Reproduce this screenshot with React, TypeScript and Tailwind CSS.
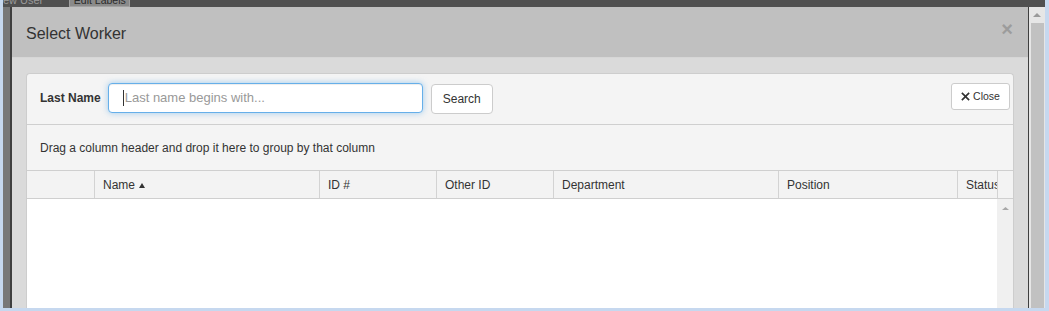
import React from 'react';

const FONT = "font-['Liberation_Sans',Arial,sans-serif]";

interface Column {
  label: string;
  width: string;
  sorted?: boolean;
}

const COLUMNS: Column[] = [
  { label: '', width: 'w-[68px]' },
  { label: 'Name', width: 'w-[225px]', sorted: true },
  { label: 'ID #', width: 'w-[117px]' },
  { label: 'Other ID', width: 'w-[117px]' },
  { label: 'Department', width: 'w-[225px]' },
  { label: 'Position', width: 'w-[179px]' },
  { label: 'Status', width: 'w-[40px]' },
];

function TimesIcon() {
  return (
    <svg width="9" height="9" viewBox="0 0 10 10" className="shrink-0">
      <path
        d="M1.6 0.3 L5 3.7 L8.4 0.3 L9.7 1.6 L6.3 5 L9.7 8.4 L8.4 9.7 L5 6.3 L1.6 9.7 L0.3 8.4 L3.7 5 L0.3 1.6 Z"
        fill="#333"
      />
    </svg>
  );
}

function UpArrow({ color, w, h }: { color: string; w: number; h: number }) {
  return (
    <svg width={w} height={h} viewBox={`0 0 ${w} ${h}`}>
      <polygon points={`0,${h} ${w / 2},0 ${w},${h}`} fill={color} />
    </svg>
  );
}

// Grid toolbar with the last name search
function SearchBar() {
  return (
    <div className="flex h-[51px] shrink-0 items-start border-b border-[#cfcfcf] pl-[13px] pr-[3px]">
      <label className="mt-[17px] text-[12px] font-bold leading-[14px] text-[#333]">Last Name</label>
      <div className="ml-[7px] mt-[9px] flex h-[30px] w-[315px] items-center rounded-[4px] border border-[#66afe9] bg-white pl-[14px] shadow-[inset_0_1px_1px_rgba(0,0,0,0.075),0_0_6px_rgba(102,175,233,0.6)]">
        <span className="h-[16px] w-px bg-[#333]" />
        <span className="ml-px text-[13px] text-[#999]">Last name begins with...</span>
      </div>
      <button className="ml-[8px] mt-[10px] h-[30px] rounded-[4px] border border-[#ccc] bg-white px-[11px] text-[12px] text-[#333]">
        Search
      </button>
      <button className="ml-auto mt-[9px] flex h-[27px] w-[59px] items-center justify-center gap-[3px] rounded-[3px] border border-[#ccc] bg-white text-[10.5px] text-[#333]">
        <TimesIcon />
        Close
      </button>
    </div>
  );
}

function GridHeader() {
  return (
    <div className="flex h-[28px] shrink-0 border-b border-[#cfcfcf] bg-[#f3f3f3]">
      {COLUMNS.map((col, i) => (
        <div
          key={i}
          className={`${col.width} flex shrink-0 items-center overflow-hidden whitespace-nowrap border-r border-[#d3d3d3] pl-[8px] text-[12px] text-[#333]`}
        >
          {col.label}
          {col.sorted && (
            <span className="ml-[4px] mt-px">
              <UpArrow color="#333" w={6} h={5} />
            </span>
          )}
        </div>
      ))}
      <div className="flex-1" />
    </div>
  );
}

export default function App() {
  return (
    <div className={`${FONT} flex h-[311px] w-[1049px] flex-col overflow-hidden bg-[#c6d8ef] pb-[3px] pl-[3px] pr-[4px]`}>
      {/* page behind the modal */}
      <div className="h-[7px] shrink-0 overflow-hidden bg-[#3a3a3a]">
        <div className="-mt-[9px] flex h-[16px] items-end bg-[#505050] text-[11px] leading-[13px]">
          <span className="-ml-[8px] text-[#9a9a9a]">New User</span>
          <span className="ml-[26px] h-[16px] w-[61px] border border-[#a0a0a0] bg-[#8a8a8a] pt-[2px] text-center text-[10.5px] text-[#2a2a2a]">
            Edit Labels
          </span>
        </div>
      </div>

      <div className="flex min-h-0 flex-1">
        <div className="w-[7px] shrink-0 bg-[#787878]" />
        <div className="w-[2px] shrink-0 bg-[#3f3f3f]" />

        {/* modal */}
        <div className="flex min-w-0 flex-1 flex-col">
          <div className="flex h-[51px] shrink-0 items-center justify-between border-b border-[#d6d6d6] bg-[#c0c0c0] pl-[14px] pr-[15px]">
            <h4 className="mt-[4px] text-[16px] text-[#333]">Select Worker</h4>
            <span className="mt-[-6px] text-[20px] font-bold leading-none text-[#9c9c9c]">×</span>
          </div>
          <div className="flex min-h-0 flex-1 flex-col bg-[#dadada] px-[14px] pt-[15px]">
            <div className="flex min-h-0 flex-1 flex-col overflow-hidden rounded-t-[4px] border border-b-0 border-[#cdcdcd] bg-[#f4f4f4]">
              <SearchBar />
              <div className="flex h-[46px] shrink-0 items-center border-b border-[#cfcfcf] pl-[13px] text-[12px] text-[#333]">
                Drag a column header and drop it here to group by that column
              </div>
              <GridHeader />
              <div className="flex min-h-0 flex-1">
                <div className="flex-1 bg-white" />
                <div className="flex w-[16px] shrink-0 justify-center bg-[#f0f0f0] pt-[8px]">
                  <UpArrow color="#a8a8a8" w={7} h={3} />
                </div>
              </div>
            </div>
          </div>
        </div>

        <div className="w-px shrink-0 bg-[#3f3f3f]" />
        {/* page scrollbar */}
        <div className="flex w-[16px] shrink-0 flex-col bg-[#e6e6e6]">
          <div className="flex h-[16px] items-center justify-center">
            <UpArrow color="#9a9a9a" w={8} h={4} />
          </div>
          <div className="ml-[2px] mr-px flex-1 bg-[#c1c1c1]" />
        </div>
      </div>
    </div>
  );
}
